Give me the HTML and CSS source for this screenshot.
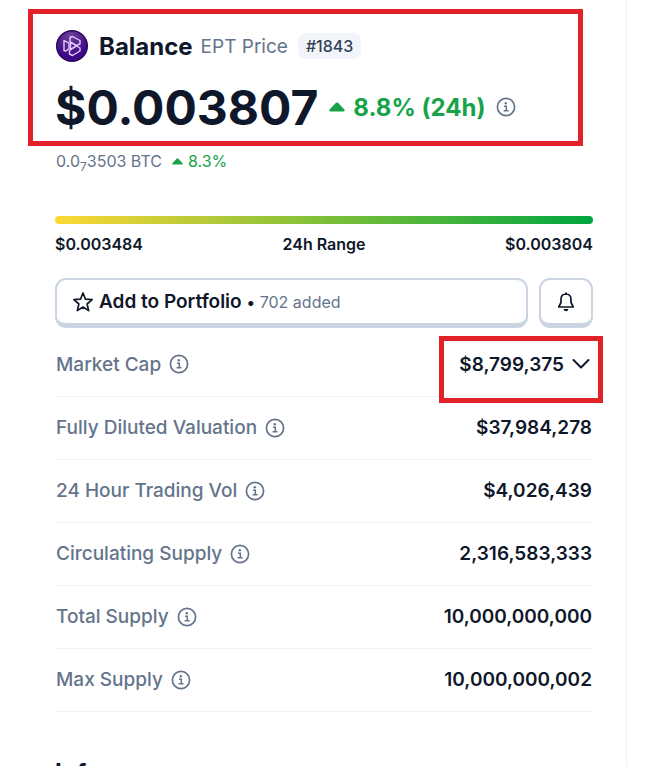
FILE: index.html
```html
<!DOCTYPE html>
<html lang="en">
<head>
    <meta charset="UTF-8">
    <meta name="viewport" content="width=device-width, initial-scale=1.0">
    <title>Balance EPT Price</title>
    <link rel="stylesheet" href="styles.css">
</head>
<body>
    <!-- Shared icons -->
    <svg class="icon-defs" aria-hidden="true">
        <symbol id="icon-info" viewBox="0 0 20 20">
            <circle cx="10" cy="10" r="8.6" fill="none" stroke="currentColor" stroke-width="1.7"/>
            <circle cx="9.8" cy="6.3" r="1.2" fill="currentColor"/>
            <path d="M8 9.2h2.3v4.4M7.6 13.8h5" fill="none" stroke="currentColor" stroke-width="1.5"/>
        </symbol>
        <symbol id="icon-up" viewBox="0 0 16 10">
            <path d="M7 .8Q8 0 9 .8L15.4 7.4Q16.3 9.5 14.5 9.5H1.5Q-.3 9.5 .6 7.4Z" fill="currentColor"/>
        </symbol>
    </svg>

    <main class="panel">
        <header class="summary">
            <div class="title-row">
                <svg class="coin-logo" viewBox="0 0 34 34" aria-hidden="true">
                    <defs>
                        <radialGradient id="coin-bg" cx="45%" cy="15%" r="70%">
                            <stop offset="0" stop-color="#6b4298"/>
                            <stop offset="1" stop-color="#3d0587"/>
                        </radialGradient>
                    </defs>
                    <circle cx="17" cy="17" r="15.3" fill="url(#coin-bg)" stroke="#2a0858" stroke-width="1.5"/>
                    <g fill="none" stroke="#e5c8ff" stroke-width="1.4" stroke-linejoin="round">
                        <path d="M9 11.5 14 14.2V19.5L11 22 9 21.5Z"/>
                        <path d="M15 8.5 17.500 7.500 25 11.500V15L21.500 16.500 15 12.500Z"/>
                        <path d="M15.500 13.500 21.500 16.700 15.500 20.500Z"/>
                        <path d="M21.500 17 25 19V22L17.500 26.500 14.500 25V21.300Z"/>
                    </g>
                </svg>
                <h1 class="coin-name">Balance</h1>
                <span class="coin-symbol">EPT Price</span>
                <span class="rank">#1843</span>
            </div>
            <div class="price-row">
                <span class="price">$0.003807</span>
                <span class="change">
                    <svg class="arrow" aria-hidden="true"><use href="#icon-up"/></svg>
                    8.8% (24h)
                </span>
                <svg class="info" aria-hidden="true"><use href="#icon-info"/></svg>
            </div>
        </header>

        <div class="btc-row">
            <span>0.0<sub>7</sub>3503 BTC</span>
            <span class="btc-change">
                <svg class="arrow-small" aria-hidden="true"><use href="#icon-up"/></svg>
                8.3%
            </span>
        </div>

        <div class="range-bar"></div>
        <div class="range-labels">
            <span>$0.003484</span>
            <span>24h Range</span>
            <span>$0.003804</span>
        </div>

        <div class="actions">
            <button type="button" class="btn btn-portfolio">
                <svg class="star" viewBox="0 0 22 22" aria-hidden="true">
                    <path d="M11 2 13.5 8.2 20.2 8.7 15.1 13 16.7 19.6 11 16 5.3 19.6 6.9 13 1.8 8.7 8.5 8.2Z" fill="none" stroke="currentColor" stroke-width="1.7" stroke-linejoin="round"/>
                </svg>
                <span>Add to Portfolio</span>
                <span class="dot">•</span>
                <span class="added">702 added</span>
            </button>
            <button type="button" class="btn btn-alert" aria-label="Price alert">
                <svg class="bell" viewBox="0 0 20 20" aria-hidden="true">
                    <path d="M10 2C6.7 2 5 4.3 5 7.5V10.5L2.7 15H17.3L15 10.5V7.5C15 4.3 13.3 2 10 2Z" fill="none" stroke="currentColor" stroke-width="1.7" stroke-linejoin="round"/>
                    <path d="M9 .5h2V2H9ZM7.5 17h5Q12 19.3 10 19.3T7.5 17Z" fill="currentColor"/>
                </svg>
            </button>
        </div>

        <table class="stats">
            <tr>
                <th scope="row"><span class="label">Market Cap <svg class="info" aria-hidden="true"><use href="#icon-info"/></svg></span></th>
                <td>
                    <button type="button" class="expand">
                        $8,799,375
                        <svg class="chevron" viewBox="0 0 18 12" aria-hidden="true">
                            <path d="M1.5 2 9 9.5 16.5 2" fill="none" stroke="currentColor" stroke-width="2" stroke-linecap="round" stroke-linejoin="round"/>
                        </svg>
                    </button>
                </td>
            </tr>
            <tr>
                <th scope="row"><span class="label">Fully Diluted Valuation <svg class="info" aria-hidden="true"><use href="#icon-info"/></svg></span></th>
                <td>$37,984,278</td>
            </tr>
            <tr>
                <th scope="row"><span class="label">24 Hour Trading Vol <svg class="info" aria-hidden="true"><use href="#icon-info"/></svg></span></th>
                <td>$4,026,439</td>
            </tr>
            <tr>
                <th scope="row"><span class="label">Circulating Supply <svg class="info" aria-hidden="true"><use href="#icon-info"/></svg></span></th>
                <td>2,316,583,333</td>
            </tr>
            <tr>
                <th scope="row"><span class="label">Total Supply <svg class="info" aria-hidden="true"><use href="#icon-info"/></svg></span></th>
                <td>10,000,000,000</td>
            </tr>
            <tr>
                <th scope="row"><span class="label">Max Supply <svg class="info" aria-hidden="true"><use href="#icon-info"/></svg></span></th>
                <td>10,000,000,002</td>
            </tr>
        </table>

        <h2 class="section-title">Info</h2>
    </main>
</body>
</html>
```
FILE: styles.css
```css
* {
    box-sizing: border-box;
}
body {
    margin: 0;
    font-family: Inter, "Liberation Sans", sans-serif;
    color: #0f172a;
    background-color: #ffffff;
}
.icon-defs {
    display: none;
}
.panel {
    height: 100vh;
    overflow: hidden;
    margin-right: 32px;
    padding: 0 33px 0 55px;
    border-right: 1px solid #eff2f5;
}

/* Name and price */
.summary {
    position: relative;
    padding-top: 28px;
}
.summary::after {
    content: "";
    position: absolute;
    top: 9px;
    left: -27px;
    right: 10px;
    bottom: 0;
    border: 5px solid #e12228;
}
.title-row {
    display: flex;
    align-items: center;
    height: 36px;
}
.coin-logo {
    width: 34px;
    height: 34px;
    margin-right: 10px;
}
.coin-name {
    margin: 0 8px 0 0;
    font-size: 24px;
    font-weight: 700;
}
.coin-symbol {
    margin-right: 10px;
    font-size: 19px;
    color: #64748b;
}
.rank {
    padding: 0 8px;
    border-radius: 8px;
    font-size: 16px;
    font-weight: 500;
    line-height: 26px;
    color: #334155;
    background-color: #f1f5f9;
}
.price-row {
    display: flex;
    align-items: center;
    height: 82px;
    padding-top: 4px;
}
.price {
    margin-right: 11px;
    font-size: 48px;
    font-weight: 700;
}
.change {
    display: flex;
    align-items: center;
    gap: 8px;
    margin-right: 11px;
    font-size: 24px;
    font-weight: 700;
    color: #16a34a;
}
.arrow {
    width: 16px;
    height: 10px;
}
.info {
    width: 20px;
    height: 20px;
    color: #64748b;
}

/* Price in BTC */
.btc-row {
    display: flex;
    align-items: center;
    gap: 10px;
    height: 30px;
    padding-left: 1px;
    font-size: 16px;
    color: #64748b;
}
.btc-row sub {
    font-size: 12px;
    line-height: 0;
}
.btc-change {
    display: flex;
    align-items: center;
    gap: 5px;
    color: #16a34a;
}
.arrow-small {
    width: 11px;
    height: 7px;
}

/* 24h range */
.range-bar {
    height: 8px;
    margin-top: 40px;
    border-radius: 4px;
    background: linear-gradient(to right, #fdd835, #00a63e);
}
.range-labels {
    display: flex;
    justify-content: space-between;
    margin-top: 8px;
    font-size: 16px;
    font-weight: 600;
    line-height: 24px;
}

/* Buttons */
.actions {
    display: flex;
    gap: 11px;
    margin-top: 22px;
}
.btn {
    display: flex;
    align-items: center;
    height: 50px;
    border: 2px solid #cbd5e1;
    border-bottom-width: 5px;
    border-radius: 11px;
    font-family: inherit;
    font-size: 19px;
    font-weight: 600;
    color: #0f172a;
    background-color: #ffffff;
}
.btn-portfolio {
    flex: 1;
    padding: 0 15px;
}
.btn-alert {
    width: 54px;
    justify-content: center;
}
.star {
    width: 22px;
    height: 22px;
    margin-right: 5px;
}
.bell {
    width: 20px;
    height: 20px;
}
.dot {
    margin: 0 5px;
    font-size: 16px;
}
.added {
    font-size: 16px;
    font-weight: 400;
    color: #64748b;
}

/* Market stats */
.stats {
    width: 100%;
    margin-top: 5px;
    border-collapse: collapse;
    font-size: 19px;
}
.stats th,
.stats td {
    height: 63px;
    padding: 0 1px;
    border-bottom: 1px solid #eff2f5;
}
.stats th {
    text-align: left;
    font-weight: 500;
    color: #64748b;
}
.stats td {
    text-align: right;
    font-weight: 600;
}
.label {
    display: flex;
    align-items: center;
    gap: 8px;
}
.expand {
    position: relative;
    display: inline-flex;
    align-items: center;
    gap: 8px;
    padding: 0 2px 0 0;
    border: none;
    font: inherit;
    color: inherit;
    background: none;
}
.expand::after {
    content: "";
    position: absolute;
    top: -17px;
    left: -20px;
    right: -11px;
    bottom: -27px;
    border: 5px solid #e12228;
}
.chevron {
    width: 18px;
    height: 12px;
}
.section-title {
    margin: 45px 0 0;
    font-size: 24px;
    font-weight: 700;
    line-height: 32px;
}
```
